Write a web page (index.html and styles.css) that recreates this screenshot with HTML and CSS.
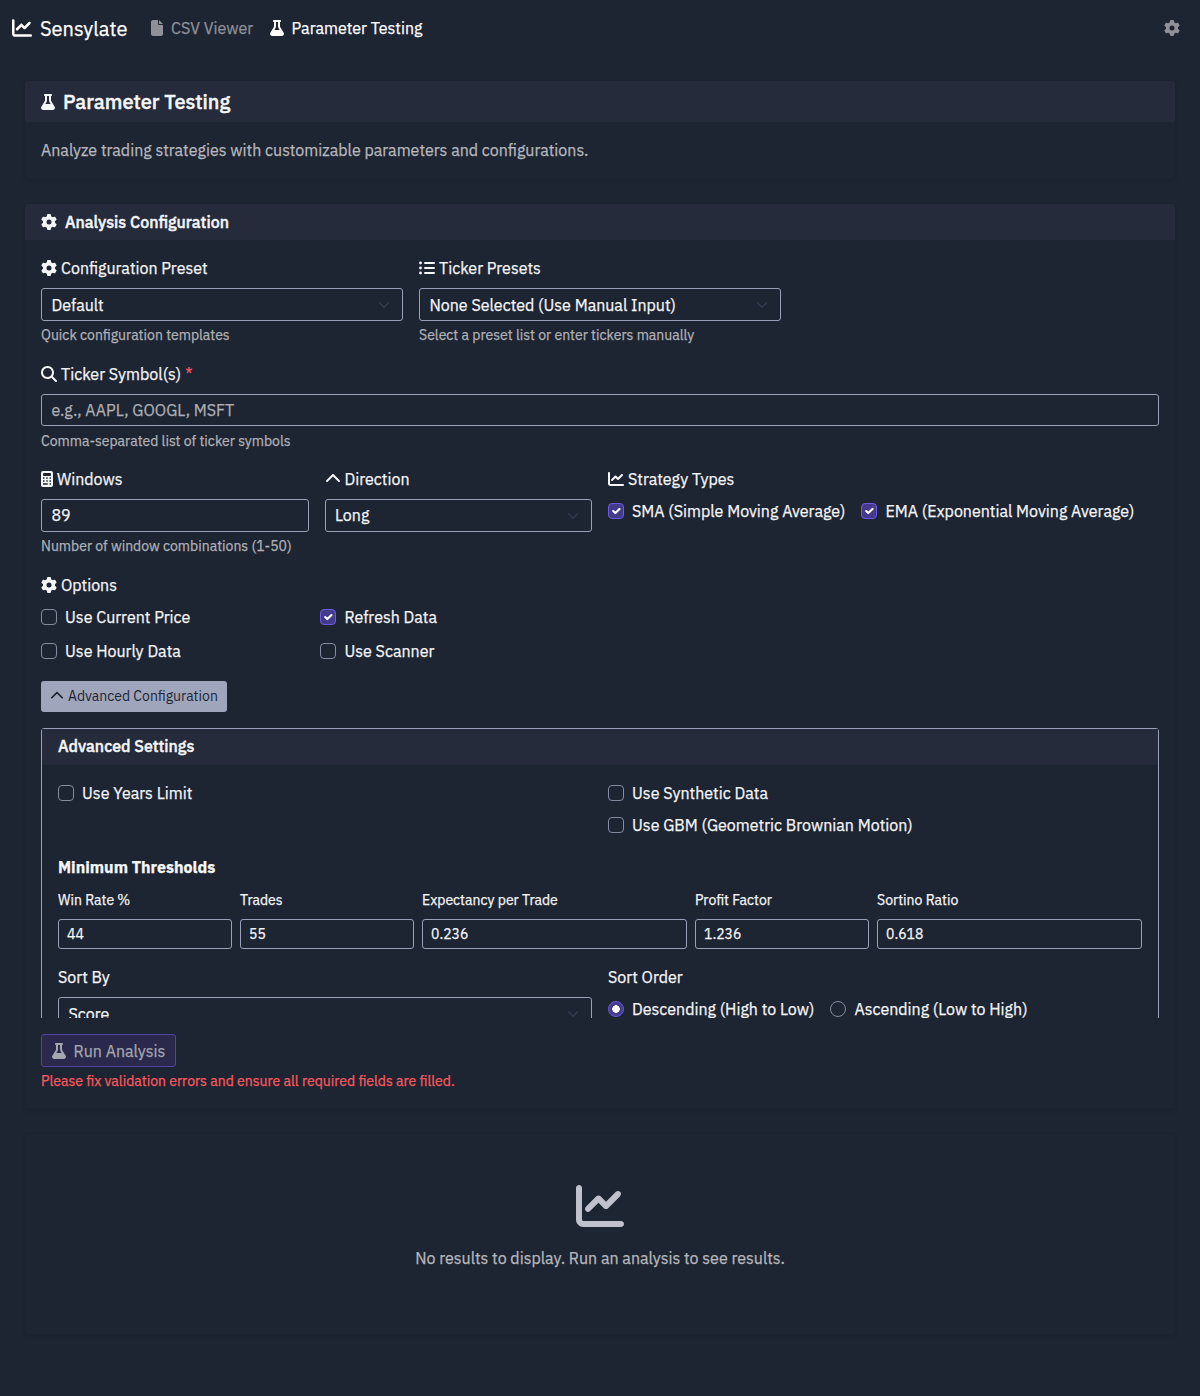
FILE: index.html
```html
<!DOCTYPE html>
<html lang="en">
<head>
<meta charset="utf-8">
<title>Sensylate - Parameter Testing</title>
<link rel="stylesheet" href="styles.css">
</head>
<body>
<svg class="sprite" aria-hidden="true">
  <symbol id="chart" viewBox="0 0 512 512"><path d="M64 64c0-17.7-14.3-32-32-32S0 46.3 0 64V400c0 44.2 35.8 80 80 80H480c17.7 0 32-14.3 32-32s-14.3-32-32-32H80c-8.8 0-16-7.2-16-16V64zm406.6 86.6c12.5-12.5 12.5-32.8 0-45.3s-32.8-12.5-45.3 0L320 210.7l-57.4-57.4c-12.5-12.5-32.8-12.5-45.3 0l-112 112c-12.5 12.5-12.5 32.8 0 45.3s32.8 12.5 45.3 0L240 221.3l57.4 57.4c12.5 12.5 32.8 12.5 45.3 0l128-128z"/></symbol>
  <symbol id="file" viewBox="0 0 384 512"><path d="M0 64C0 28.7 28.7 0 64 0H224V128c0 17.7 14.3 32 32 32H384V448c0 35.3-28.7 64-64 64H64c-35.3 0-64-28.7-64-64V64zm384 64H256V0L384 128z"/></symbol>
  <symbol id="flask" viewBox="0 0 448 512"><path d="M288 0H160 128C110.3 0 96 14.3 96 32s14.3 32 32 32V196.8c0 11.8-3.3 23.5-9.5 33.5L10.3 406.2C3.6 417.2 0 429.7 0 442.6C0 480.9 31.1 512 69.4 512H378.6c38.3 0 69.4-31.1 69.4-69.4c0-12.8-3.6-25.4-10.3-36.4L329.5 230.4c-6.2-10.1-9.5-21.7-9.5-33.5V64c17.7 0 32-14.3 32-32s-14.3-32-32-32H288zM192 196.8V64h64V196.8c0 23.7 6.6 46.9 19 67.1L309.5 320h-171L173 263.9c12.4-20.2 19-43.4 19-67.1z"/></symbol>
  <symbol id="gear" viewBox="0 0 512 512"><path d="M495.9 166.6c3.2 8.7 .5 18.4-6.4 24.6l-43.3 39.4c1.1 8.3 1.7 16.8 1.7 25.4s-.6 17.1-1.7 25.4l43.3 39.4c6.9 6.2 9.6 15.9 6.4 24.6c-4.4 11.9-9.7 23.3-15.8 34.3l-4.7 8.1c-6.6 11-14 21.4-22.1 31.2c-5.9 7.2-15.7 9.6-24.5 6.8l-55.7-17.7c-13.4 10.3-28.2 18.9-44 25.4l-12.5 57.1c-2 9.1-9 16.3-18.2 17.8c-13.8 2.3-28 3.5-42.5 3.5s-28.7-1.2-42.5-3.5c-9.2-1.5-16.2-8.7-18.2-17.8l-12.5-57.1c-15.8-6.5-30.6-15.1-44-25.4L83.1 425.9c-8.8 2.8-18.6 .3-24.5-6.8c-8.1-9.8-15.5-20.2-22.1-31.2l-4.7-8.1c-6.1-11-11.4-22.4-15.8-34.3c-3.2-8.7-.5-18.4 6.4-24.6l43.3-39.4C64.6 273.1 64 264.6 64 256s.6-17.1 1.7-25.4L22.4 191.2c-6.9-6.2-9.6-15.9-6.4-24.6c4.4-11.9 9.7-23.3 15.8-34.3l4.7-8.1c6.6-11 14-21.4 22.1-31.2c5.9-7.2 15.7-9.6 24.5-6.8l55.7 17.7c13.4-10.3 28.2-18.9 44-25.4l12.5-57.1c2-9.1 9-16.3 18.2-17.8C227.3 1.2 241.5 0 256 0s28.7 1.2 42.5 3.5c9.2 1.5 16.2 8.7 18.2 17.8l12.5 57.1c15.8 6.5 30.6 15.1 44 25.4l55.7-17.7c8.8-2.8 18.6-.3 24.5 6.8c8.1 9.8 15.5 20.2 22.1 31.2l4.7 8.1c6.1 11 11.4 22.4 15.8 34.3zM256 336a80 80 0 1 0 0-160 80 80 0 1 0 0 160z"/></symbol>
  <symbol id="list" viewBox="0 0 512 512"><circle cx="48" cy="96" r="46"/><circle cx="48" cy="256" r="46"/><circle cx="48" cy="416" r="46"/><rect x="160" y="64" width="352" height="64" rx="32"/><rect x="160" y="224" width="352" height="64" rx="32"/><rect x="160" y="384" width="352" height="64" rx="32"/></symbol>
  <symbol id="search" viewBox="0 0 512 512"><path d="M416 208c0 45.9-14.9 88.3-40 122.7L502.6 457.4c12.5 12.5 12.5 32.8 0 45.3s-32.8 12.5-45.3 0L330.7 376c-34.4 25.2-76.8 40-122.7 40C93.1 416 0 322.9 0 208S93.1 0 208 0S416 93.1 416 208zM208 352a144 144 0 1 0 0-288 144 144 0 1 0 0 288z"/></symbol>
  <symbol id="calc" viewBox="0 0 384 512"><path fill-rule="evenodd" d="M64 0H320a64 64 0 0 1 64 64V448a64 64 0 0 1-64 64H64a64 64 0 0 1-64-64V64A64 64 0 0 1 64 0zM96 64a32 32 0 0 0-32 32v32a32 32 0 0 0 32 32H288a32 32 0 0 0 32-32V96a32 32 0 0 0-32-32zM64 200h48v48H64zM168 200h48v48h-48zM272 200h48v48h-48zM64 296h48v48H64zM168 296h48v48h-48zM272 296h48v48h-48zM64 392h152v48H64zM272 392h48v48h-48z"/></symbol>
  <symbol id="up" viewBox="0 0 512 512"><path d="M233.4 105.4c12.5-12.5 32.8-12.5 45.3 0l192 192c12.5 12.5 12.5 32.8 0 45.3s-32.8 12.5-45.3 0L256 173.3 86.6 342.6c-12.5 12.5-32.8 12.5-45.3 0s-12.5-32.8 0-45.3l192-192z"/></symbol>
  <symbol id="down" viewBox="0 0 16 16"><path d="m2 5 6 6 6-6" fill="none" stroke="currentColor" stroke-width="2" stroke-linecap="round" stroke-linejoin="round"/></symbol>
  <symbol id="tick" viewBox="0 0 20 20"><path d="m6 10 3 3 6-6" fill="none" stroke="currentColor" stroke-width="3" stroke-linecap="round" stroke-linejoin="round"/></symbol>
</svg>

<nav class="navbar">
  <a class="brand"><svg class="icon i20"><use href="#chart"/></svg><span>Sensylate</span></a>
  <a class="nav-link dim"><svg class="icon w12"><use href="#file"/></svg><span>CSV Viewer</span></a>
  <a class="nav-link"><svg class="icon w14"><use href="#flask"/></svg><span>Parameter Testing</span></a>
  <a class="settings"><svg class="icon"><use href="#gear"/></svg></a>
</nav>

<main class="container">
  <section class="card">
    <h5 class="card-header title"><svg class="icon w14"><use href="#flask"/></svg><span>Parameter Testing</span></h5>
    <p class="card-body lead">Analyze trading strategies with customizable parameters and configurations.</p>
  </section>

  <section class="card">
    <h6 class="card-header"><svg class="icon"><use href="#gear"/></svg><span>Analysis Configuration</span></h6>
    <div class="card-body">
      <div class="form-scroll">
        <div class="row thirds">
          <div class="field">
            <label class="label"><svg class="icon"><use href="#gear"/></svg><span>Configuration Preset</span></label>
            <div class="control">Default<svg class="caret"><use href="#down"/></svg></div>
            <div class="help">Quick configuration templates</div>
          </div>
          <div class="field">
            <label class="label"><svg class="icon"><use href="#list"/></svg><span>Ticker Presets</span></label>
            <div class="control">None Selected (Use Manual Input)<svg class="caret"><use href="#down"/></svg></div>
            <div class="help">Select a preset list or enter tickers manually</div>
          </div>
        </div>
        <div class="field tickers">
          <label class="label"><svg class="icon"><use href="#search"/></svg><span>Ticker Symbol(s)</span><span class="required">*</span></label>
          <div class="control placeholder">e.g., AAPL, GOOGL, MSFT</div>
          <div class="help">Comma-separated list of ticker symbols</div>
        </div>
        <div class="row windows">
          <div class="field">
            <label class="label"><svg class="icon w12"><use href="#calc"/></svg><span>Windows</span></label>
            <div class="control">89</div>
            <div class="help">Number of window combinations (1-50)</div>
          </div>
          <div class="field">
            <label class="label"><svg class="icon"><use href="#up"/></svg><span>Direction</span></label>
            <div class="control">Long<svg class="caret"><use href="#down"/></svg></div>
          </div>
          <div class="field">
            <label class="label"><svg class="icon"><use href="#chart"/></svg><span>Strategy Types</span></label>
            <div class="inline-checks">
              <label class="check"><i class="box on"><svg><use href="#tick"/></svg></i><span>SMA (Simple Moving Average)</span></label>
              <label class="check"><i class="box on"><svg><use href="#tick"/></svg></i><span>EMA (Exponential Moving Average)</span></label>
            </div>
          </div>
        </div>
        <div class="options">
          <label class="label"><svg class="icon"><use href="#gear"/></svg><span>Options</span></label>
          <div class="option-grid">
            <label class="check"><i class="box"></i><span>Use Current Price</span></label>
            <label class="check"><i class="box on"><svg><use href="#tick"/></svg></i><span>Refresh Data</span></label>
            <label class="check"><i class="box"></i><span>Use Hourly Data</span></label>
            <label class="check"><i class="box"></i><span>Use Scanner</span></label>
          </div>
        </div>
        <button class="toggle"><svg class="icon i14"><use href="#up"/></svg><span>Advanced Configuration</span></button>
        <div class="advanced">
          <h6 class="adv-header">Advanced Settings</h6>
          <div class="adv-body">
            <div class="row halves">
              <div><label class="check"><i class="box"></i><span>Use Years Limit</span></label></div>
              <div class="stack">
                <label class="check"><i class="box"></i><span>Use Synthetic Data</span></label>
                <label class="check"><i class="box"></i><span>Use GBM (Geometric Brownian Motion)</span></label>
              </div>
            </div>
            <h6 class="sub">Minimum Thresholds</h6>
            <div class="thresholds">
              <div><label class="small">Win Rate %</label><div class="input-sm">44</div></div>
              <div><label class="small">Trades</label><div class="input-sm">55</div></div>
              <div><label class="small">Expectancy per Trade</label><div class="input-sm">0.236</div></div>
              <div><label class="small">Profit Factor</label><div class="input-sm">1.236</div></div>
              <div><label class="small">Sortino Ratio</label><div class="input-sm">0.618</div></div>
            </div>
            <div class="row halves">
              <div><label class="label">Sort By</label><div class="control">Score<svg class="caret"><use href="#down"/></svg></div></div>
              <div><label class="label">Sort Order</label>
                <div class="inline-checks">
                  <label class="check"><i class="box radio on"></i><span>Descending (High to Low)</span></label>
                  <label class="check"><i class="box radio"></i><span>Ascending (Low to High)</span></label>
                </div>
              </div>
            </div>
          </div>
        </div>
      </div>
      <button class="run"><svg class="icon w14"><use href="#flask"/></svg><span>Run Analysis</span></button>
      <div class="error">Please fix validation errors and ensure all required fields are filled.</div>
    </div>
  </section>

  <section class="card empty">
    <svg class="icon i48"><use href="#chart"/></svg>
    <p>No results to display. Run an analysis to see results.</p>
  </section>
</main>
</body>
</html>
```
FILE: styles.css
```css
* { box-sizing: border-box; }
body {
  margin: 0;
  min-height: 1396px;
  background: #1d2432;
  color: #f5f6f8;
  font: 400 16px/24px "IBM Plex Sans", Roboto, sans-serif;
  -webkit-text-stroke: 0.25px;
}
h5, h6, p { margin: 0; }
.sprite { position: absolute; width: 0; height: 0; }
.icon { width: 16px; height: 16px; flex: none; fill: currentColor; }
.w12 { width: 12px; }
.w14 { width: 14px; }
.i14 { width: 14px; height: 14px; }
.i20 { width: 20px; height: 20px; }
.i48 { width: 48px; height: 48px; }

.navbar { display: flex; align-items: center; height: 56.4px; padding: 0 20px 0 12px; color: #fff; }
.brand { display: flex; align-items: center; gap: 8px; margin-right: 23.6px; font-size: 20px; }
.brand span { padding-top: 2px; }
.nav-link { display: flex; align-items: center; gap: 8px; margin-right: 16.5px; }
.nav-link.dim, .settings { color: #8e9199; }
.settings { margin-left: auto; display: flex; }

.container { padding: 24px; }
.card { border: 1px solid #1c2230; border-radius: 4px; margin-bottom: 24px; box-shadow: 0 2px 4px rgba(0, 0, 0, .06); }
.card-header { display: flex; align-items: center; gap: 8px; height: 35.5px; padding: 0 16px; background: #252b3a; font-size: 16px; font-weight: 500; -webkit-text-stroke: 0.4px; border-radius: 3px 3px 0 0; }
.card-header.title { height: 41px; font-size: 20px; }
.card-header + .card-body:not(.lead) { padding-top: 16.6px; }
.card-body { padding: 16px; }
.lead { color: #b6b8bd; }

.form-scroll { height: 762px; overflow: hidden; }
.row { display: grid; gap: 16px; }
.thirds { grid-template-columns: repeat(3, 1fr); }
.windows { grid-template-columns: 267.5px 267.5px 1fr; }
.halves { grid-template-columns: 1fr 1fr; }
.field { margin-bottom: 16px; }
.label { display: flex; align-items: center; gap: 4px; height: 24px; margin-bottom: 8px; }
.required { color: #fa5a5f; }
.control { position: relative; height: 32.5px; padding: 0 9.5px; border: 1px solid #99a1b8; border-radius: 3px; line-height: 32px; }
.tickers .control, .windows .control { line-height: 30px; }
.tickers .help { height: 20.5px; margin-top: 4.5px; }
.placeholder { color: #acafb5; }
.caret { position: absolute; right: 12px; top: 10px; width: 12px; height: 12px; color: #343b50; }
.help { height: 21px; margin-top: 4px; color: #b0b2b7; font-size: 14px; line-height: 21px; }
.inline-checks { display: flex; gap: 16px; }
.check { display: flex; align-items: center; gap: 8px; height: 24px; }
.box { display: block; flex: none; width: 16px; height: 16px; border: 1px solid #858ca0; border-radius: 4px; }
.box.on { background: #453b8d; border-color: #6f5ae6; }
.box svg { display: block; width: 14px; height: 14px; color: #fff; }
.radio { border-radius: 50%; }
.radio.on { background: radial-gradient(circle, #fff 3.5px, #453b8d 4px); }
.option-grid { display: grid; grid-template-columns: 279.4px 279.4px; row-gap: 10px; }
.toggle { display: flex; align-items: center; gap: 4px; height: 31px; margin-top: 18px; padding: 0 9px; border: 0; border-radius: 3px; background: #9fa6bc; color: #1d2432; font: inherit; font-size: 14px; -webkit-text-stroke: 0; }

.advanced { margin-top: 16px; height: 400px; border: 1px solid #99a1b8; border-radius: 3px; }
.adv-header { height: 36px; padding: 0 16px; background: #252b3a; font-size: 16px; font-weight: 500; line-height: 35px; -webkit-text-stroke: 0.4px; }
.adv-body { padding: 16px; }
.stack { display: grid; gap: 8px; }
.sub { margin: 18px 0 11px; font-size: 16px; font-weight: 700; line-height: 24px; }
.thresholds { display: grid; grid-template-columns: 174px 174px 265px 174px 265px; gap: 8px; margin-bottom: 16px; }
.small { display: block; height: 21px; margin-bottom: 8px; font-size: 14px; line-height: 21px; }
.input-sm { height: 30.5px; padding: 0 8px; border: 1px solid #99a1b8; border-radius: 3px; font-size: 14px; line-height: 29px; }

.run { display: flex; align-items: center; gap: 8px; height: 32.5px; margin-top: 16px; padding: 0 9.5px; border: 1px solid #5343a9; border-radius: 3px; background: #2a294c; color: #a5a6ae; font: inherit; }
.error { height: 21px; margin-top: 4px; color: #fa5a5f; font-size: 14px; line-height: 21px; }

.empty { display: flex; flex-direction: column; align-items: center; gap: 16px; padding: 48px 48px 64px; color: #b6b8bd; }
.empty .icon { color: #bfc2cc; }
```
